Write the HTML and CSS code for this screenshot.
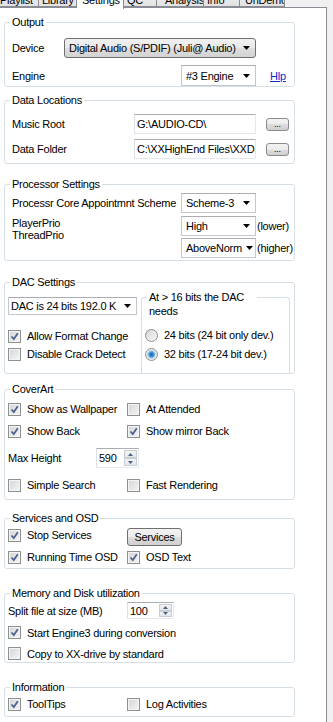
FILE: index.html
```html
<!DOCTYPE html>
<html lang="en">

<head>
    <meta charset="UTF-8">
    <meta name="viewport" content="width=device-width, initial-scale=1.0">
    <title>Settings</title>
    <link rel="stylesheet" href="styles.css">
</head>

<body>
    <!-- tab strip, only the lower part is visible -->
    <div class="tabs">
        <div class="tab t-playlist">Playlist</div>
        <div class="tab t-library">Library</div>
        <div class="tab t-settings active">Settings</div>
        <div class="tab t-qc">QC</div>
        <div class="tab t-analysis">Analysis</div>
        <div class="tab t-info">Info</div>
        <div class="tab t-undemo">UnDemo</div>
    </div>

    <div class="page">
        <!-- Output -->
        <fieldset class="group output">
            <legend>Output</legend>
            <div class="row r-device">
                <span class="lbl">Device</span>
                <div class="combo drop w-device"><span>Digital Audio (S/PDIF) (Juli@ Audio)</span><svg class="arrow" width="7" height="4"><path d="M0 0h7L3.5 4z"/></svg></div>
                <span></span>
            </div>
            <div class="row r-engine">
                <span class="lbl">Engine</span>
                <div class="combo w-small tall"><span>#3 Engine</span><svg class="arrow" width="7" height="4"><path d="M0 0h7L3.5 4z"/></svg></div>
                <a class="link" href="#">Hlp</a>
            </div>
        </fieldset>

        <!-- Data Locations -->
        <fieldset class="group data">
            <legend>Data Locations</legend>
            <div class="row">
                <span class="lbl">Music Root</span>
                <div class="field w-field">G:\AUDIO-CD\</div>
                <button class="btn dots">...</button>
            </div>
            <div class="row r-folder">
                <span class="lbl">Data Folder</span>
                <div class="field w-field">C:\XXHighEnd Files\XXData\</div>
                <button class="btn dots">...</button>
            </div>
        </fieldset>

        <!-- Processor Settings -->
        <fieldset class="group proc">
            <legend>Processor Settings</legend>
            <div class="row">
                <span class="lbl">Processr Core Appointmnt Scheme</span>
                <div class="combo w-small"><span>Scheme-3</span><svg class="arrow" width="7" height="4"><path d="M0 0h7L3.5 4z"/></svg></div>
                <span></span>
            </div>
            <div class="row r-player">
                <span class="lbl lifted">PlayerPrio</span>
                <div class="combo w-small"><span>High</span><svg class="arrow" width="7" height="4"><path d="M0 0h7L3.5 4z"/></svg></div>
                <span class="note">(lower)</span>
            </div>
            <div class="row r-thread">
                <span class="lbl raised">ThreadPrio</span>
                <div class="combo w-small"><span>AboveNorm</span><svg class="arrow" width="7" height="4"><path d="M0 0h7L3.5 4z"/></svg></div>
                <span class="note">(higher)</span>
            </div>
        </fieldset>

        <!-- DAC Settings -->
        <fieldset class="group dac">
            <legend>DAC Settings</legend>
            <div class="dac-body">
                <div class="dac-left">
                    <div class="combo w-dac"><span>DAC is 24 bits 192.0 K</span><svg class="arrow" width="7" height="4"><path d="M0 0h7L3.5 4z"/></svg></div>
                    <div class="dac-checks">
                        <label class="check"><span class="box"><svg width="9" height="9"><path d="M1.5 4.5l2.3 2.6L7.8 1.3" /></svg></span>Allow Format Change</label>
                        <label class="check"><span class="box"></span>Disable Crack Detect</label>
                    </div>
                </div>
                <fieldset class="sub">
                    <legend>At &gt; 16 bits the DAC needs</legend>
                    <div class="radios">
                        <label class="check"><span class="radio"></span>24 bits (24 bit only dev.)</label>
                        <label class="check"><span class="radio on"></span>32 bits (17-24 bit dev.)</label>
                    </div>
                </fieldset>
            </div>
        </fieldset>

        <!-- CoverArt -->
        <fieldset class="group cover">
            <legend>CoverArt</legend>
            <div class="cols">
                <label class="check"><span class="box"><svg width="9" height="9"><path d="M1.5 4.5l2.3 2.6L7.8 1.3" /></svg></span>Show as Wallpaper</label>
                <label class="check"><span class="box"></span>At Attended</label>
            </div>
            <div class="cols gap4">
                <label class="check"><span class="box"><svg width="9" height="9"><path d="M1.5 4.5l2.3 2.6L7.8 1.3" /></svg></span>Show Back</label>
                <label class="check"><span class="box"><svg width="9" height="9"><path d="M1.5 4.5l2.3 2.6L7.8 1.3" /></svg></span>Show mirror Back</label>
            </div>
            <div class="spin-row gap8">
                <span class="lbl w-maxh">Max Height</span>
                <div class="spin w-spin1">
                    <span class="val">590</span>
                    <span class="spin-btns">
                        <span class="up"><svg width="5" height="3"><path d="M0 3h5L2.5 0z"/></svg></span>
                        <span class="down"><svg width="5" height="3"><path d="M0 0h5L2.5 3z"/></svg></span>
                    </span>
                </div>
            </div>
            <div class="cols gap8">
                <label class="check"><span class="box"></span>Simple Search</label>
                <label class="check"><span class="box"></span>Fast Rendering</label>
            </div>
        </fieldset>

        <!-- Services and OSD -->
        <fieldset class="group services">
            <legend>Services and OSD</legend>
            <div class="cols top">
                <label class="check short"><span class="box"><svg width="9" height="9"><path d="M1.5 4.5l2.3 2.6L7.8 1.3" /></svg></span>Stop Services</label>
                <div><button class="btn svc">Services</button></div>
            </div>
            <div class="cols gap2">
                <label class="check"><span class="box"><svg width="9" height="9"><path d="M1.5 4.5l2.3 2.6L7.8 1.3" /></svg></span>Running Time OSD</label>
                <label class="check"><span class="box"><svg width="9" height="9"><path d="M1.5 4.5l2.3 2.6L7.8 1.3" /></svg></span>OSD Text</label>
            </div>
        </fieldset>

        <!-- Memory and Disk utilization -->
        <fieldset class="group memory">
            <legend>Memory and Disk utilization</legend>
            <div class="spin-row">
                <span class="lbl w-split">Split file at size (MB)</span>
                <div class="spin w-spin2">
                    <span class="val">100</span>
                    <span class="spin-btns">
                        <span class="up"><svg width="5" height="3"><path d="M0 3h5L2.5 0z"/></svg></span>
                        <span class="down"><svg width="5" height="3"><path d="M0 0h5L2.5 3z"/></svg></span>
                    </span>
                </div>
            </div>
            <label class="check low gap5"><span class="box"><svg width="9" height="9"><path d="M1.5 4.5l2.3 2.6L7.8 1.3" /></svg></span>Start Engine3 during conversion</label>
            <label class="check low gap4"><span class="box"></span>Copy to XX-drive by standard</label>
        </fieldset>

        <!-- Information -->
        <fieldset class="group info">
            <legend>Information</legend>
            <div class="cols">
                <label class="check"><span class="box"><svg width="9" height="9"><path d="M1.5 4.5l2.3 2.6L7.8 1.3" /></svg></span>ToolTips</label>
                <label class="check"><span class="box"></span>Log Activities</label>
            </div>
        </fieldset>
    </div>
</body>

</html>
```

FILE: styles.css
```css
* {
    box-sizing: border-box;
}

html,
body {
    margin: 0;
}

body {
    height: 722px;
    overflow: hidden;
    background: #f0f0f0;
    color: #000;
    font: 11px "Liberation Sans", Arial, sans-serif;
    letter-spacing: -0.25px;
}

/* tabs */
.tabs {
    display: flex;
    height: 7px;
}

.tab {
    height: 18px;
    margin-top: -11px;
    padding: 2px 0 0 3px;
    line-height: 16px;
    white-space: nowrap;
    overflow: hidden;
    border: 1px solid #898c95;
    border-left-width: 0;
    background: linear-gradient(#f3f3f3, #e2e2e2);
}

.tab.active {
    position: relative;
    z-index: 1;
    height: 20px;
    padding-left: 5px;
    border-bottom: 0;
    background: #fff;
}

.t-playlist { width: 43px; margin-left: -4px; padding-left: 4px; }
.t-library { width: 38px; }
.t-settings { width: 47px; }
.t-qc { width: 33px; }
.t-analysis { width: 47px; padding-left: 8px; }
.t-info { width: 36px; }
.t-undemo { width: 45px; padding-left: 5px; }

/* white tab page */
.page {
    width: 327px;
    min-height: 730px;
    padding-left: 4px;
    background: #fff;
    border: 1px solid #898c95;
    border-left: 0;
}

/* group boxes */
.group {
    width: 291px;
    margin: 0;
    padding: 0 3px;
    min-inline-size: 0;
    border: 1px solid #d5dfe5;
    border-radius: 3px;
}

.group legend {
    height: 14px;
    margin-left: 2px;
    padding: 0 2px;
    line-height: 14px;
}

.output { margin-top: 7px; padding-top: 9px; }
.data { margin-top: 6px; padding-top: 7px; padding-bottom: 4px; }
.proc { margin-top: 13px; padding-top: 2px; padding-bottom: 2px; }
.dac { margin-top: 14px; }
.cover { margin-top: 8px; padding-top: 4px; padding-bottom: 5px; }
.services { margin-top: 11px; padding-top: 3px; padding-bottom: 2px; }
.memory { margin-top: 17px; padding-top: 2px; }
.info { margin-top: 17px; padding-top: 1px; padding-bottom: 3px; }

/* label | control | extra */
.row {
    display: grid;
    grid-template-columns: 1fr auto 35px;
    align-items: center;
    height: 20px;
    padding-left: 4px;
    white-space: nowrap;
}

.r-engine { margin-top: 7px; height: 21px; }
.r-folder { margin-top: 5px; }
.r-player { margin-top: 3px; }
.r-thread { margin-top: 2px; }

.lbl {
    line-height: 14px;
}

.lifted {
    align-self: start;
    margin-top: 0;
}

.raised {
    align-self: start;
    margin-top: -10px;
}

.note {
    padding-left: 1px;
}

.link {
    margin-left: 14px;
    color: #0a2dcc;
    text-decoration: underline;
}

/* combo boxes */
.combo {
    display: flex;
    align-items: center;
    justify-content: space-between;
    height: 20px;
    padding: 0 5px 0 4px;
    white-space: nowrap;
    overflow: hidden;
    background: #fff;
    border: 1px solid #c3c7ce;
    border-top-color: #abadb3;
}

.combo.tall {
    height: 21px;
}

.combo.drop {
    background: linear-gradient(#f1f1f1, #e8e8e8 50%, #dedede 50%, #d3d3d3);
    border-color: #707070;
    border-radius: 3px;
}

.arrow {
    flex: none;
    margin-left: 4px;
    fill: #000;
}

.w-device { width: 192px; }
.w-small { width: 75px; }
.w-dac { width: 129px; height: 18px; padding-left: 2px; }

/* text fields */
.field {
    height: 20px;
    padding-left: 2px;
    line-height: 18px;
    white-space: nowrap;
    overflow: hidden;
    border: 1px solid #e3e9ef;
    border-top-color: #abadb3;
    border-left-color: #dbdfe6;
}

.w-field { width: 122px; }

/* buttons */
.btn {
    font: inherit;
    letter-spacing: inherit;
    color: #000;
    padding: 0;
    border: 1px solid #707070;
    border-radius: 3px;
    background: linear-gradient(#f2f2f2, #ebebeb 50%, #dddddd 50%, #cfcfcf);
}

.dots {
    width: 23px;
    height: 13px;
    margin-left: 10px;
    font-size: 9px;
    line-height: 8px;
    border-color: #8c8c8c;
}

.svc {
    width: 55px;
    height: 18px;
}

/* checkboxes and radios */
.check {
    display: flex;
    align-items: center;
    gap: 6px;
    height: 18px;
    white-space: nowrap;
}

.check.short {
    height: 14px;
}

.check.low {
    height: 17px;
}

.box {
    flex: none;
    display: flex;
    align-items: center;
    justify-content: center;
    width: 13px;
    height: 13px;
    border: 1px solid #8e8f8f;
    background: linear-gradient(135deg, #d4d4d4, #f6f6f6);
    box-shadow: inset 0 0 0 1px #f4f4f4;
}

.box path {
    fill: none;
    stroke: #4a5f8e;
    stroke-width: 1.7;
}

.radio {
    flex: none;
    width: 13px;
    height: 13px;
    border: 1px solid #8e8f8f;
    border-radius: 50%;
    background: linear-gradient(135deg, #d6d6d6, #f8f8f8);
}

.radio.on {
    background: radial-gradient(circle, #1f5fa5 0, #3a8ad3 2px, #8dc8ee 3.5px, #e6e6e6 4.5px, #f4f4f4 6px);
}

/* two column rows */
.cols {
    display: grid;
    grid-template-columns: 119px 1fr;
    align-items: center;
}

.cols.top {
    align-items: start;
}

.gap2 { margin-top: 2px; }
.gap4 { margin-top: 4px; }
.gap5 { margin-top: 5px; }
.gap8 { margin-top: 8px; }

/* DAC */
.dac-body {
    display: flex;
    gap: 4px;
}

.dac-left {
    padding-top: 8px;
}

.dac-checks {
    margin-top: 12px;
}

.sub {
    width: 149px;
    height: 83px;
    margin: 1px 0 0;
    padding: 0 0 0 3px;
    min-inline-size: 0;
    border: 1px solid #d5dfe5;
    border-bottom: 0;
    border-radius: 3px 3px 0 0;
}

.sub legend {
    width: 110px;
    height: 14px;
    padding: 0 2px;
    line-height: 14px;
}

.radios {
    padding-top: 22px;
}

.radios .check + .check {
    margin-top: 1px;
}

/* spin boxes */
.spin-row {
    display: flex;
    align-items: center;
}

.w-maxh { width: 88px; }
.w-split { width: 119px; }

.spin {
    display: flex;
    height: 20px;
    border: 1px solid #e3e9ef;
    border-top-color: #abadb3;
    border-left-color: #dbdfe6;
}

.w-spin1 { width: 43px; }
.w-spin2 { width: 47px; height: 17px; }

.val {
    flex: 1;
    padding-left: 2px;
    align-self: center;
}

.spin-btns {
    display: flex;
    flex-direction: column;
    width: 13px;
    margin: 1px 1px 1px 0;
}

.spin-btns span {
    flex: 1;
    display: flex;
    align-items: center;
    justify-content: center;
    border: 1px solid #c9cdd4;
    background: linear-gradient(#f4f4f4, #e3e6ea);
}

.spin-btns svg {
    fill: #4d6185;
}
```
